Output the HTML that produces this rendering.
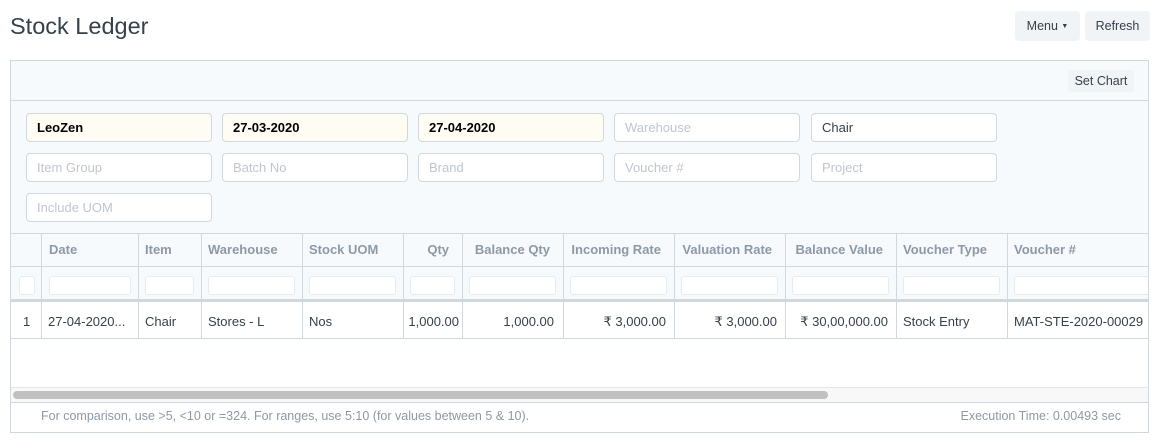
<!DOCTYPE html>
<html><head><meta charset="utf-8">
<style>
*{box-sizing:border-box;margin:0;padding:0}
body{width:1158px;height:441px;background:#fff;font-family:"Liberation Sans",sans-serif;position:relative;overflow:hidden;color:#36414c}
.a{position:absolute}
.title{left:10px;top:10px;font-size:23.5px;color:#36414c;line-height:32px}
.btn{background:#f0f4f7;border-radius:4px;font-size:12.5px;color:#36414c;text-align:center;line-height:30px;height:30px;top:11px}
.box{left:10px;top:60px;width:1139px;height:373px;border:1px solid #d1d8dd;overflow:hidden}
.in{position:absolute;left:-1px;top:-1px;width:1139px;height:373px}
.tb{left:0;top:0;width:1139px;height:41px;background:#f7fafc;border-bottom:1px solid #d1d8dd}
.fa{left:0;top:41px;width:1139px;height:132px;background:#f7fafc}
.inp{position:absolute;width:186px;height:29px;border:1px solid #d1d8dd;border-radius:4px;background:#fff;font-size:13px;line-height:27px;padding-left:10px;color:#c0c6cc}
.inp.y{background:#fffdf3;color:#000;font-weight:bold}
.inp.v{color:#36414c}
.hd{position:absolute;left:0;top:173px;width:1200px;height:34px;background:#f7fafc;border-top:1px solid #d1d8dd;border-bottom:1px solid #d1d8dd}
.fr{position:absolute;left:0;top:207px;width:1200px;height:35px;background:#f7fafc;border-bottom:3px solid #d1d8dd}
.cell{position:absolute;font-size:13px;white-space:nowrap}
.h{font-weight:bold;color:#8d99a6;top:182px}
.d{top:254px;color:#36414c}
.fi{position:absolute;top:216px;height:19px;background:#fff;border:1px solid #e6ebf0;border-radius:3px}
.vl{position:absolute;top:173px;height:106px;width:1px;background:#d1d8dd}
</style></head><body>
<div class="a title">Stock Ledger</div>
<div class="a btn" style="left:1015px;width:65px">Menu <span style="font-size:7px;vertical-align:2px">&#9660;</span></div>
<div class="a btn" style="left:1085px;width:65px">Refresh</div>
<div class="a box"><div class="in">
 <div class="a tb"><div class="a" style="left:1058px;top:10px;width:66px;height:22px;background:#f0f4f7;border-radius:3px;font-size:12.5px;line-height:22px;text-align:center">Set Chart</div></div>
 <div class="a fa">
  <div class="inp y" style="left:16px;top:12px">LeoZen</div>
  <div class="inp y" style="left:212px;top:12px">27-03-2020</div>
  <div class="inp y" style="left:408px;top:12px">27-04-2020</div>
  <div class="inp" style="left:604px;top:12px">Warehouse</div>
  <div class="inp v" style="left:801px;top:12px">Chair</div>
  <div class="inp" style="left:16px;top:52px">Item Group</div>
  <div class="inp" style="left:212px;top:52px">Batch No</div>
  <div class="inp" style="left:408px;top:52px">Brand</div>
  <div class="inp" style="left:604px;top:52px">Voucher #</div>
  <div class="inp" style="left:801px;top:52px">Project</div>
  <div class="inp" style="left:16px;top:92px">Include UOM</div>
 </div>
 <div class="hd"></div>
 <div class="fr"></div>
 <div class="a" style="left:0;top:278px;width:1139px;height:1px;background:#d1d8dd"></div>
 <div class="vl" style="left:31px"></div><div class="vl" style="left:128px"></div><div class="vl" style="left:191px"></div><div class="vl" style="left:292px"></div><div class="vl" style="left:393px"></div><div class="vl" style="left:452px"></div><div class="vl" style="left:553px"></div><div class="vl" style="left:664px"></div><div class="vl" style="left:775px"></div><div class="vl" style="left:886px"></div><div class="vl" style="left:997px"></div>
 <div class="fi" style="left:9px;width:16px"></div>
 <div class="fi" style="left:39px;width:82px"></div>
 <div class="fi" style="left:135px;width:49px"></div>
 <div class="fi" style="left:198px;width:87px"></div>
 <div class="fi" style="left:299px;width:87px"></div>
 <div class="fi" style="left:400px;width:45px"></div>
 <div class="fi" style="left:459px;width:87px"></div>
 <div class="fi" style="left:560px;width:97px"></div>
 <div class="fi" style="left:671px;width:97px"></div>
 <div class="fi" style="left:782px;width:97px"></div>
 <div class="fi" style="left:893px;width:97px"></div>
 <div class="fi" style="left:1004px;width:140px"></div>
 <div class="cell h" style="left:39px">Date</div>
 <div class="cell h" style="left:135px">Item</div>
 <div class="cell h" style="left:198px">Warehouse</div>
 <div class="cell h" style="left:393px;width:46px;text-align:right">Qty</div>
 <div class="cell h" style="left:299px">Stock UOM</div>
 <div class="cell h" style="left:452px;width:88px;text-align:right">Balance Qty</div>
 <div class="cell h" style="left:553px;width:98px;text-align:right">Incoming Rate</div>
 <div class="cell h" style="left:664px;width:98px;text-align:right">Valuation Rate</div>
 <div class="cell h" style="left:775px;width:98px;text-align:right">Balance Value</div>
 <div class="cell h" style="left:893px">Voucher Type</div>
 <div class="cell h" style="left:1004px">Voucher #</div>
 <div class="cell d" style="left:13px">1</div>
 <div class="cell d" style="left:38px">27-04-2020...</div>
 <div class="cell d" style="left:135px">Chair</div>
 <div class="cell d" style="left:198px">Stores - L</div>
 <div class="cell d" style="left:299px">Nos</div>
 <div class="cell d" style="left:393px;width:56px;text-align:right">1,000.00</div>
 <div class="cell d" style="left:452px;width:92px;text-align:right">1,000.00</div>
 <div class="cell d" style="left:553px;width:103px;text-align:right">₹ 3,000.00</div>
 <div class="cell d" style="left:664px;width:103px;text-align:right">₹ 3,000.00</div>
 <div class="cell d" style="left:775px;width:103px;text-align:right">₹ 30,00,000.00</div>
 <div class="cell d" style="left:893px">Stock Entry</div>
 <div class="cell d" style="left:1004px">MAT-STE-2020-00029</div>
 <div class="a" style="left:0;top:327px;width:1139px;height:16px;background:#f8f8f8;border-top:1px solid #e6e6e6;border-bottom:1px solid #d1d8dd"></div>
 <div class="a" style="left:3px;top:331px;width:815px;height:8px;background:#c1c1c1;border-radius:4px"></div>
 <div class="cell" style="left:31px;top:349px;font-size:12.5px;color:#8d99a6">For comparison, use &gt;5, &lt;10 or =324. For ranges, use 5:10 (for values between 5 &amp; 10).</div>
 <div class="cell" style="right:28px;top:349px;font-size:12.5px;color:#8d99a6">Execution Time: 0.00493 sec</div>
</div></div>
</body></html>
